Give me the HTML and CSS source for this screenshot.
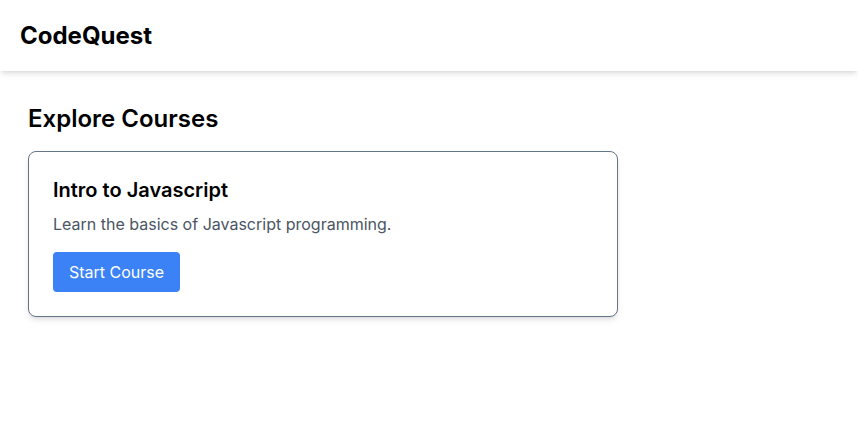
FILE: index.html
```html
<!DOCTYPE html>
<html lang="en">
<head>
<meta charset="utf-8">
<title>CodeQuest</title>
<link rel="stylesheet" href="styles.css">
</head>
<body>
<header class="topbar">
  <h1 class="brand">CodeQuest</h1>
</header>
<main class="content">
  <h2 class="section-title">Explore Courses</h2>
  <div class="course-card">
    <h3 class="course-title">Intro to Javascript</h3>
    <p class="course-desc">Learn the basics of Javascript programming.</p>
    <button class="btn-start">Start Course</button>
  </div>
</main>
</body>
</html>
```
FILE: styles.css
```css
* { box-sizing: border-box; }
html, body { margin: 0; padding: 0; background: #fff; }
body {
  font-family: Inter, "Noto Sans", sans-serif;
  color: #000;
}
.topbar {
  height: 71px;
  padding: 0 20px;
  display: flex;
  align-items: center;
  background: #fff;
  box-shadow: 0 4px 6px -1px rgba(0,0,0,0.1), 0 2px 4px -2px rgba(0,0,0,0.1);
  position: relative;
}
.brand {
  margin: 0;
  font-size: 24px;
  line-height: 32px;
  font-weight: 700;
}
.content {
  padding: 32px 28px;
}
.section-title {
  margin: 0 0 16px;
  font-size: 24px;
  line-height: 32px;
  font-weight: 600;
}
.course-card {
  width: 590px;
  border: 1px solid #64748b;
  border-radius: 8px;
  padding: 24px;
  background: #fff;
  box-shadow: 0 4px 6px -1px rgba(0,0,0,0.1), 0 2px 4px -2px rgba(0,0,0,0.1);
}
.course-title {
  margin: 0 0 8px;
  font-size: 20px;
  line-height: 28px;
  font-weight: 600;
}
.course-desc {
  margin: 0 0 16px;
  font-size: 16px;
  line-height: 24px;
  color: #4b5563;
}
.btn-start {
  display: block;
  height: 40px;
  padding: 0 16px;
  border: 0;
  border-radius: 4px;
  background: #3b82f6;
  color: #fff;
  font-family: inherit;
  font-size: 16px;
  line-height: 24px;
  cursor: pointer;
}
```
